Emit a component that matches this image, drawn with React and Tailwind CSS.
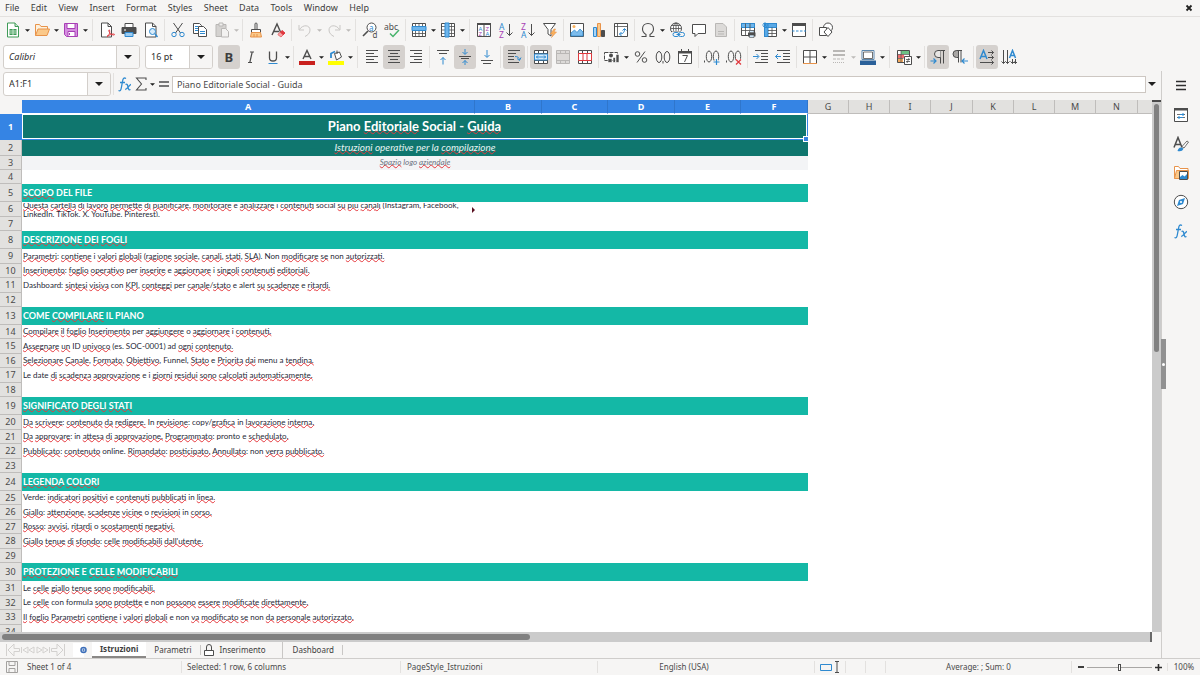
import { Fragment } from 'react';
import clsx from 'clsx';

const INK = '#4d4d4d';
const BLUE = '#2f8ad0';
const RED = '#e0383e';
const ORANGE = '#e8934a';
const GREEN = '#3f9b57';
const PURPLE = '#a83fb5';
const FADED = '#b9b7b5';

const glyph = { fontFamily: '"Noto Sans", sans-serif' };

// every icon is drawn on a 16x16 grid
const ICONS = {
    new: (
        <>
            <path d="M2.500 1h7.500l3.500 3.500V15h-11z" fill="#fff" stroke={GREEN} />
            <path d="M10 1v3.500h3.500" fill="#cfe9d5" stroke={GREEN} />
            <path d="M4.500 7h7v6h-7z" fill={GREEN} />
            <path d="M4.500 9h7M4.500 11h7M8 7v6" stroke="#d9f0de" strokeWidth=".8" />
        </>
    ),
    open: (
        <>
            <path d="M1.500 13.500v-11h4l1.500 2h6.500v3" fill="#fdf1dd" stroke={ORANGE} />
            <path d="M1.500 13.500l2.500-6.500h11.500l-2.500 6.500z" fill="#fbc98a" stroke={ORANGE} />
        </>
    ),
    save: (
        <>
            <path d="M1.500 1.500h13v13h-11l-2-2z" fill="#d58ee0" stroke={PURPLE} />
            <path d="M4 1.500h8v5H4z" fill="#fff" stroke={PURPLE} />
            <path d="M5 9.500h7v5H5z" fill="#fff" stroke={PURPLE} />
            <path d="M6.500 11v2" stroke={PURPLE} />
        </>
    ),
    pdf: (
        <>
            <path d="M2.500 1h6.500l3.500 3.500V15h-10z" fill="#fff" stroke={INK} />
            <path d="M9 1v3.500h3.500" fill="none" stroke={INK} />
            <path d="M8 14.500c3-2 3-5 2.500-6.500-1-1-1 2 1 3.500 1.500 1.500 4 2 4 1s-4-.500-7.500 2z" fill="#fff" stroke={RED} />
        </>
    ),
    print: (
        <>
            <path d="M4 5V1.500h8V5" fill="#fff" stroke={INK} />
            <path d="M1 5.500h14v6H1z" fill={INK} stroke={INK} />
            <path d="M4 10.500h8v4H4z" fill="#9ccbf0" stroke={BLUE} />
            <path d="M3 8h2" stroke="#fff" />
        </>
    ),
    preview: (
        <>
            <path d="M2.500 1h7l3.500 3.500V15H2.500z" fill="#fff" stroke={INK} />
            <path d="M9.500 1v3.500H13" fill="none" stroke={INK} />
            <circle cx="9.500" cy="9.500" r="3" fill="#d9ecfa" stroke={BLUE} />
            <path d="M12 12l2.500 3" stroke={BLUE} strokeWidth="1.500" />
        </>
    ),
    cut: (
        <>
            <path d="M3.500 1l7 10M12.500 1l-7 10" stroke={INK} fill="none" />
            <circle cx="4" cy="12.500" r="2.200" fill="none" stroke={BLUE} />
            <circle cx="12" cy="12.500" r="2.200" fill="none" stroke={BLUE} />
        </>
    ),
    copy: (
        <>
            <path d="M1.500 1.500h6l2 2v8h-8z" fill="#fff" stroke={INK} />
            <path d="M6.500 4.500h5l3 3v7h-8z" fill="#fff" stroke={INK} />
            <path d="M8 9.500h5M8 11.500h5M3 4.500h3M3 6.500h3M3 8.500h3" stroke={BLUE} />
        </>
    ),
    paste: (
        <>
            <path d="M2 2.500h10v12H2z" fill="#d4d2d0" stroke={FADED} />
            <path d="M5 1h4v3H5z" fill="#efeeed" stroke={FADED} />
            <path d="M7.500 6.500h4l3 3v5.500h-7z" fill="#f3f2f1" stroke={FADED} />
        </>
    ),
    clone: (
        <>
            <path d="M7 7V2a1 1 0 012 0v5" fill="#fff" stroke={INK} />
            <path d="M3.500 7.500h9v3h-9z" fill="#fff" stroke={INK} />
            <path d="M3.500 10.500h9l1 4.500H2.500z" fill="#fbc98a" stroke={ORANGE} />
            <path d="M6 12v3M9 12v3" stroke={ORANGE} />
        </>
    ),
    clear: (
        <>
            <path d="M2 13L7 2l3.500 8M4 9.500h5" stroke={INK} strokeWidth="1.400" fill="none" />
            <path d="M8 12.500l4-4 3 2.500-4 4z" fill={RED} stroke={RED} />
            <path d="M8 12.500l2-2 3 2.500-2 2z" fill="#f5a3a6" />
        </>
    ),
    undo: <path d="M2 3v5h5M2.500 7.500C6 2 13 3 13 8c0 3-2 5-5 6.500" fill="none" stroke="#c9c7c5" />,
    redo: <path d="M14 3v5H9M13.500 7.500C10 2 3 3 3 8c0 3 2 5 5 6.500" fill="none" stroke="#c9c7c5" />,
    find: (
        <>
            <circle cx="9.500" cy="5.500" r="4.500" fill="#fff" stroke={INK} />
            <path d="M6 9l-5 5" stroke={INK} strokeWidth="1.600" />
            <text x="7" y="8.500" fontSize="8" fill={BLUE} style={glyph}>a</text>
            <text x="10.500" y="15.500" fontSize="8" fill={INK} style={glyph}>d</text>
        </>
    ),
    spell: (
        <>
            <text x="0" y="7.500" fontSize="8.500" fill={INK} style={glyph}>abc</text>
            <path d="M6 11.500l3 3 6-6.500" fill="none" stroke="#47b36b" strokeWidth="1.500" />
        </>
    ),
    row: (
        <>
            <path d="M1.500 1.500h13v13h-13z" fill="#fff" stroke={INK} />
            <path d="M1.500 11.500h13M4.500 1.500v13M8 1.500v13M11.500 1.500v13" stroke={INK} strokeWidth=".8" />
            <path d="M1 4.500h14v4H1z" fill="#6db5ec" stroke={BLUE} />
        </>
    ),
    column: (
        <>
            <path d="M1.500 1.500h13v13h-13z" fill="#fff" stroke={INK} />
            <path d="M11.500 1.500v13M1.500 4.500h13M1.500 8h13M1.500 11.500h13" stroke={INK} strokeWidth=".8" />
            <path d="M5 1h4v14H5z" fill="#6db5ec" stroke={BLUE} />
        </>
    ),
    sort: (
        <>
            <path d="M1.500 1.500h13v13h-13z" fill="#fff" stroke={INK} />
            <path d="M1 1h14v2H1z" fill={INK} />
            <path d="M8 3v12" stroke={INK} />
            <g fontSize="6" style={glyph}>
                <text x="2.500" y="8.500" fill={BLUE}>A</text>
                <text x="2.500" y="14" fill={PURPLE}>Z</text>
                <text x="9.500" y="8.500" fill={PURPLE}>Z</text>
                <text x="9.500" y="14" fill={BLUE}>A</text>
            </g>
        </>
    ),
    sortAsc: (
        <>
            <text x="1" y="7.500" fontSize="8.500" fill={BLUE} style={glyph}>A</text>
            <text x="1" y="15.500" fontSize="8.500" fill={PURPLE} style={glyph}>Z</text>
            <path d="M11.500 2v11.500M8.500 10.500l3 3 3-3" fill="none" stroke={INK} />
        </>
    ),
    sortDesc: (
        <>
            <text x="1" y="7.500" fontSize="8.500" fill={PURPLE} style={glyph}>Z</text>
            <text x="1" y="15.500" fontSize="8.500" fill={BLUE} style={glyph}>A</text>
            <path d="M11.500 2v11.500M8.500 10.500l3 3 3-3" fill="none" stroke={INK} />
        </>
    ),
    filter: (
        <>
            <path d="M1.500 1.500h12L9 7.500V14l-3-2V7.500z" fill="#fff" stroke={INK} />
            <path d="M12 7l-3.500 5h2.500l-1.500 3.500L14.500 10H12l1.500-3z" fill="#fbb25c" stroke={ORANGE} strokeWidth=".6" />
        </>
    ),
    image: (
        <>
            <path d="M1.500 1.500h13v13h-13z" fill="#fff" stroke={INK} />
            <path d="M2 14v-3l3.500-3L8 10.500l3-3.500 3 3v4z" fill="#7dbcec" stroke={BLUE} strokeWidth=".8" />
            <circle cx="5" cy="4.500" r="1.500" fill="#fbb25c" />
        </>
    ),
    chart: (
        <>
            <path d="M2.500 5.500h3v9h-3z" fill="#a8d3f5" stroke={BLUE} />
            <path d="M6.500 1.500h3v13h-3z" fill="#fbc98a" stroke={ORANGE} />
            <path d="M10.500 8.500h3v6h-3z" fill={INK} stroke={INK} />
        </>
    ),
    pivot: (
        <>
            <path d="M1.500 1.500h13v13h-13z" fill="#fff" stroke={INK} />
            <path d="M1.500 4.500h13M4.500 1.500v13" stroke={INK} strokeWidth=".8" />
            <path d="M6.500 12c4 0 5-2 5-5M9.500 8.500l2-2 2 2M8.500 10l-2 2 2 2" fill="none" stroke={BLUE} />
        </>
    ),
    omega: <path d="M1.500 14.500h4.500v-2C3.500 11 2.500 9 2.500 7c0-3.500 2.500-5.500 5.500-5.500s5.500 2 5.500 5.500c0 2-1 4-3.500 5.500v2h4.500" fill="none" stroke={INK} strokeWidth="1.100" />,
    hyperlink: (
        <>
            <circle cx="7" cy="6.500" r="5.500" fill="#fff" stroke={INK} />
            <path d="M1.500 6.500h11M7 1v11M2.500 3.500h9M2.500 9.500h9" stroke={INK} strokeWidth=".8" />
            <ellipse cx="7" cy="6.500" rx="2.600" ry="5.500" fill="none" stroke={INK} strokeWidth=".8" />
            <path d="M3 9.500h13v6H3z" fill="#f6f5f4" />
            <rect x="4" y="10.500" width="6" height="4" rx="2" fill="none" stroke={BLUE} />
            <rect x="9.500" y="10.500" width="6" height="4" rx="2" fill="none" stroke={BLUE} />
            <path d="M7.500 12.500h4" stroke={BLUE} />
        </>
    ),
    comment: <path d="M1.500 2.500h13v9H7l-3 3v-3H1.500z" fill="#fff" stroke={INK} />,
    header: (
        <>
            <path d="M2.500 1.500h7.500l3.500 3.500v9.500h-11z" fill="#dcdad8" stroke={FADED} />
            <path d="M5 9.500h6M5 12h6" stroke={FADED} />
        </>
    ),
    printArea: (
        <>
            <path d="M1.500 1.500h13v12h-13z" fill="#fff" stroke={INK} />
            <path d="M1.500 1.500h13v4h-13z" fill="#6db5ec" stroke={BLUE} />
            <path d="M1.500 8.500h13M5.500 1.500v12M10 1.500v12" stroke={INK} strokeWidth=".8" />
            <path d="M8 10.500h7.500v4H8z" fill={INK} />
            <path d="M9.500 8.500h4.500v2H9.500zM9.500 13h4.500v2.500H9.500z" fill="#cfe6f8" stroke={INK} strokeWidth=".6" />
        </>
    ),
    freeze: (
        <>
            <path d="M2.500 1.500h12v13h-12z" fill="#fff" stroke={INK} />
            <path d="M2.500 1.500h12v4h-12zM2.500 1.500h3.500v13H2.500z" fill="#5aa9e6" stroke={BLUE} />
            <path d="M6 8.500h8.500M6 11.500h8.500M10 5.500v9" stroke={INK} strokeWidth=".8" />
            <path d="M3 0v6M0 3h6M1 1l4 4M5 1L1 5" stroke={BLUE} strokeWidth=".8" />
        </>
    ),
    split: (
        <>
            <path d="M1.500 1.500h13v13h-13z" fill="#fff" stroke={INK} />
            <path d="M1 1h14v3H1z" fill={INK} />
            <path d="M1 9h14" stroke={BLUE} strokeDasharray="2.500 1.500" />
        </>
    ),
    shapes: (
        <>
            <circle cx="10" cy="5.500" r="4.500" fill="#fff" stroke={INK} />
            <path d="M1.500 5.500h7v8h-7z" fill="#fff" stroke={INK} />
            <path d="M10 5.500l4 4.500-4 4.500L6 10z" fill="#fff" stroke={INK} />
        </>
    ),
    bold: <text x="3.500" y="13" fontSize="13" fontWeight="700" fill="#3d3d3d" style={glyph}>B</text>,
    italic: <path d="M7 3h4M5 13.500h4M9.200 3L6.800 13.500" stroke={INK} strokeWidth="1.200" fill="none" />,
    underline: (
        <>
            <path d="M4.500 2.500v6.500c0 4 7 4 7 0V2.500" fill="none" stroke={INK} strokeWidth="1.300" />
            <path d="M3.500 14.500h9" stroke={BLUE} />
        </>
    ),
    fontColor: (
        <>
            <path d="M4 10L8 1.500 12 10M5.500 7.500h5" fill="none" stroke={INK} strokeWidth="1.400" />
            <path d="M0 12h16v4H0z" fill="#c9211e" />
        </>
    ),
    highlight: (
        <>
            <path d="M6.500 4.500l5-1.500 2 5-5 3z" fill="#fff" stroke={INK} />
            <path d="M9 5V1.500" stroke={INK} />
            <path d="M3 9V4.500l4-2" fill="none" stroke={BLUE} strokeWidth="1.800" />
            <path d="M0 12h16v4H0z" fill="#ffff00" />
        </>
    ),
    alignLeft: <path d="M2 1.500h12M2 4.500h8M2 7.500h12M2 10.500h8M2 13.500h12" stroke={INK} />,
    alignCenter: <path d="M2 1.500h12M4 4.500h8M2 7.500h12M4 10.500h8M2 13.500h12" stroke={INK} />,
    alignRight: <path d="M2 1.500h12M6 4.500h8M2 7.500h12M6 10.500h8M2 13.500h12" stroke={INK} />,
    alignTop: (
        <>
            <path d="M2 1.500h12M4 4.500h8" stroke={INK} />
            <path d="M8 15.500V8.500M5.500 11L8 8.500l2.500 2.500" stroke={BLUE} fill="none" />
        </>
    ),
    alignMiddle: (
        <>
            <path d="M2 7.500h12M4 9.500h8" stroke={INK} />
            <path d="M8 0v5M5.500 3L8 5.500 10.500 3M8 16v-4.500M5.500 14L8 11.500l2.500 2.500" stroke={BLUE} fill="none" />
        </>
    ),
    alignBottom: (
        <>
            <path d="M2 11.500h12M4 14.500h8" stroke={INK} />
            <path d="M8 1v7M5.500 6L8 8.500 10.500 6" stroke={BLUE} fill="none" />
        </>
    ),
    wrap: (
        <>
            <path d="M2 1.500h12M2 4.500h8M2 7.500h6M2 10.500h6M2 13.500h11" stroke={INK} />
            <path d="M9 7.500c3 0 4 1 4.500 3.500M11 9.500l2.500 2 1.500-3" stroke={BLUE} fill="none" />
        </>
    ),
    mergeCenter: (
        <>
            <path d="M1.500 1.500h13v13h-13zM1.500 4.500h13M1.500 11.500h13M5.500 1.500v3M10.500 1.500v3M5.500 11.500v3M10.500 11.500v3" fill="#fff" stroke={INK} />
            <path d="M1.500 5h13v6h-13z" fill="#d4eafb" stroke={BLUE} />
            <path d="M3 8h10M5 6.500L3.500 8 5 9.500M11 6.500L12.500 8 11 9.500" fill="none" stroke={BLUE} />
        </>
    ),
    merge: <path d="M1.500 1.500h13v13h-13zM1.500 4.500h13M1.500 11.500h13M5.500 1.500v3M10.500 1.500v3M5.500 11.500v3M10.500 11.500v3" fill="#dcdad8" stroke={FADED} />,
    unmerge: (
        <>
            <path d="M1.500 1.500h13v13h-13zM5.500 1.500v3M10.500 1.500v3M5.500 11.500v3M10.500 11.500v3" fill="#fff" stroke={INK} />
            <path d="M1.500 4.500h13v7h-13zM6 4.500v7M10 4.500v7" fill="#fff" stroke={RED} />
        </>
    ),
    currency: (
        <>
            <path d="M.500 3.500h13v8H.500z" fill="#fff" stroke={INK} strokeDasharray="4 1" />
            <circle cx="7" cy="6.500" r="2" fill={INK} />
            <path d="M4 9.500h4v4H4zM9 8.500h2.500v5H9zM12 5.500h3v8h-3z" fill={INK} stroke="#fff" strokeWidth=".6" />
        </>
    ),
    percent: (
        <>
            <circle cx="4.500" cy="5" r="2.300" fill="none" stroke={INK} />
            <circle cx="11.500" cy="11" r="2.300" fill="none" stroke={INK} />
            <path d="M12 2.500L4 13.500" stroke={INK} />
        </>
    ),
    number: (
        <>
            <ellipse cx="4" cy="8" rx="2.800" ry="5.500" fill="none" stroke={INK} />
            <ellipse cx="12" cy="8" rx="2.800" ry="5.500" fill="none" stroke={INK} />
            <path d="M8 12v2.500" stroke={INK} />
        </>
    ),
    date: (
        <>
            <path d="M1.500 2.500h13v12h-13z" fill="#fff" stroke={INK} />
            <path d="M1 2h14v2.500H1z" fill={INK} />
            <path d="M4.500 0v3M11.500 0v3" stroke={INK} />
            <path d="M5.500 6.500h5l-3 6.500" fill="none" stroke={INK} />
        </>
    ),
    addDecimal: (
        <>
            <path d="M.500 11.500v2" stroke={INK} />
            <ellipse cx="5" cy="7.500" rx="2.700" ry="5.500" fill="none" stroke={INK} />
            <ellipse cx="12" cy="7.500" rx="2.700" ry="5.500" fill="none" stroke={INK} />
            <path d="M12.500 10v6M9.500 13h6" stroke="#f6f5f4" strokeWidth="3" />
            <path d="M12.500 10v6M9.500 13h6" stroke={BLUE} strokeWidth="1.200" />
        </>
    ),
    removeDecimal: (
        <>
            <path d="M.500 11.500v2" stroke={INK} />
            <ellipse cx="5" cy="7.500" rx="2.700" ry="5.500" fill="none" stroke={INK} />
            <ellipse cx="12" cy="7.500" rx="2.700" ry="5.500" fill="none" stroke={INK} />
            <path d="M10 10.500l5 5M15 10.500l-5 5" stroke="#f6f5f4" strokeWidth="3" />
            <path d="M10 10.500l5 5M15 10.500l-5 5" stroke={RED} strokeWidth="1.200" />
        </>
    ),
    indent: (
        <>
            <path d="M2 1.500h13M8 4.500h7M8 7.500h7M8 10.500h7M2 13.500h13" stroke={INK} />
            <path d="M0 7.500h5.500M3.500 5L6 7.500 3.500 10" stroke={BLUE} fill="none" />
        </>
    ),
    outdent: (
        <>
            <path d="M2 1.500h13M8 4.500h7M8 7.500h7M8 10.500h7M2 13.500h13" stroke={INK} />
            <path d="M.500 7.500H6M3 5L.500 7.500 3 10" stroke={BLUE} fill="none" />
        </>
    ),
    borders: (
        <>
            <path d="M1.500 14.500v-13h13v13M8 1.500v13M1.500 8h13" fill="#fff" stroke={INK} />
            <path d="M1 14.500h14" stroke={ORANGE} />
        </>
    ),
    borderStyle: (
        <>
            <path d="M2 2h12M2 6h12" stroke={FADED} strokeWidth="2" />
            <path d="M2 10h12" stroke={FADED} strokeDasharray="3 1" />
            <path d="M2 13.500h12" stroke={FADED} strokeDasharray="1 1" />
        </>
    ),
    borderColor: (
        <>
            <path d="M2 1.500h12v9H2z" fill="#fff" stroke="#5c87ad" />
            <path d="M3.500 3h9v6.500h-9z" fill="#fff" stroke={INK} strokeWidth=".8" />
            <path d="M0 11.500h16V16H0z" fill="#2a6099" />
        </>
    ),
    conditional: (
        <>
            <path d="M1.500 1.500h12v12h-12z" fill="#fff" stroke={INK} />
            <path d="M5 2h8v3H5z" fill="#6cc184" />
            <path d="M2 5.500h6v3.500H2z" fill="#ef6f6f" />
            <path d="M2 9.500h5v3.500H2z" fill="#f4a95c" />
            <path d="M5 1.500v12M1.500 5.500h12M1.500 9.500h6" stroke={INK} strokeWidth=".7" />
            <path d="M8.500 7.500h7v8h-7z" fill="#fff" stroke={INK} />
            <path d="M10 10.500h4M10 12.500h4M13 9l-2 5" stroke={INK} strokeWidth=".8" />
        </>
    ),
    ltr: (
        <>
            <path d="M9 1.500h6M10.500 1.500v13M13.500 1.500v13" stroke={INK} />
            <path d="M10.500 1.500H8a3 3 0 000 7h2.500" fill="#e8e6e4" stroke={INK} />
            <path d="M.500 12h5M3.500 9.500L6 12l-2.500 2.500" fill="none" stroke={BLUE} strokeWidth="1.200" />
        </>
    ),
    rtl: (
        <>
            <path d="M4.500 1.500H10M6.500 1.500v12M9 1.500v12" stroke={INK} />
            <path d="M6.500 1.500H4.500a3 3 0 000 7h2z" fill="#a9a7a5" stroke={INK} />
            <path d="M10 12h6M12.500 9.500L10 12l2.500 2.500" fill="none" stroke={BLUE} strokeWidth="1.200" />
        </>
    ),
    textLtr: (
        <>
            <path d="M1 10L4.500 1.500 8 10M2 7.500h5" fill="none" stroke={BLUE} strokeWidth="1.500" />
            <path d="M9 3.500h5.500M9 8.500h5.500M1 13.500h13.500M12.500 1.500l2 2-2 2M12.500 6.500l2 2-2 2M12.500 11.500l2 2-2 2" fill="none" stroke={INK} />
        </>
    ),
    textTtb: (
        <>
            <path d="M8.500 9l3-7.500 3 7.500M9.500 6.500h4" fill="none" stroke={BLUE} strokeWidth="1.500" />
            <path d="M2.500 1v13.500M6.500 1v13.500M11.500 10v4.500M.500 12.500l2 2 2-2M4.500 12.500l2 2 2-2M9.500 12.500l2 2 2-2M14.500 10v4.500M13 13l1.500 1.500L16 13" fill="none" stroke={INK} />
        </>
    ),
    fx: (
        <>
            <path d="M9 2.500c-2-1.200-3 0-3.400 2.500L4.300 12c-.4 2.500-1.300 3.300-2.800 2.500M3 6.500h5" fill="none" stroke={BLUE} strokeWidth="1.300" />
            <path d="M8.500 8.500c1.500-.8 2 0 2.500 2.500s1 3.300 2.500 2.500M14 8.500c-1.500 0-4 5-5.800 5" fill="none" stroke={BLUE} strokeWidth="1.300" />
        </>
    ),
    sigma: <path d="M13 4V2H3.500L8.500 8l-5 6H13v-2" fill="none" stroke={INK} strokeWidth="1.100" />,
    equals: <path d="M3 6h10M3 10h10" stroke={INK} strokeWidth="1.600" />,
    menu: <path d="M3 3.500h10M3 7.500h10M3 11.500h10" stroke="#2e2e2e" strokeWidth="1.500" />,
    properties: (
        <>
            <path d="M1.500 1.500h13v13h-13z" fill="#fff" stroke={INK} />
            <path d="M1 1h14v2.500H1z" fill={INK} />
            <path d="M4 7.500h8M4 10.500h8" stroke={INK} strokeWidth=".8" />
            <path d="M10 6v3M6 9v3M5 10.500h5M7 7.500h4" stroke={BLUE} />
        </>
    ),
    styles: (
        <>
            <path d="M1 11.500L5 1.500 9 11.500M2.500 8.500h5" fill="none" stroke={INK} strokeWidth="1.500" />
            <path d="M9 10.500l5-5.500 1.500 1-4.500 6z" fill="#fff" stroke={INK} strokeWidth=".8" />
            <path d="M4.500 15c1-3.500 3-4.500 6-2.500-1 3-3.500 3-6 2.500z" fill={BLUE} />
        </>
    ),
    gallery: (
        <>
            <path d="M1.500 13.500v-12h4l1.500 2h8v3" fill="#fff" stroke={ORANGE} />
            <path d="M1.500 13.500l2-8h12v8z" fill="#fbc98a" stroke={ORANGE} />
            <path d="M6.500 6.500h8v8h-8z" fill="#fff" stroke={INK} />
            <path d="M7 14v-2l2.500-2 2 1.500 2.500-2.500v5z" fill={BLUE} />
        </>
    ),
    navigator: (
        <>
            <circle cx="8" cy="8" r="6.700" fill="#fff" stroke={INK} />
            <path d="M12 4l-2 6-6 2 2-6z" fill={BLUE} />
            <circle cx="8" cy="8" r="1.100" fill="#fff" />
        </>
    ),
    lock: (
        <>
            <path d="M3.500 8.500h9v5h-9z" fill="#fff" stroke={INK} />
            <path d="M5.500 8.500V5a2.500 2.500 0 015 0v3.500" fill="none" stroke={INK} />
        </>
    ),
    addSheet: (
        <>
            <path d="M0 1h11v14H0z" fill="#fff" />
            <circle cx="10.500" cy="8" r="2.500" fill="#fff" stroke="#3b6db8" strokeWidth="1.500" />
            <path d="M10.500 6.500v3M9 8h3" stroke="#3b6db8" strokeWidth=".8" />
        </>
    ),
    docSave: (
        <>
            <path d="M2.500 2.500h11v11h-11z" fill="none" stroke="#a3a19f" />
            <path d="M5 2.500h6v4H5zM5 9.500h6v4H5z" fill="none" stroke="#a3a19f" />
        </>
    ),
    close: <path d="M5.500 5.500l5 5M10.500 5.500l-5 5" stroke="#222" strokeWidth="1.800" />,
    firstSheet: <path d="M1.500 2v12M14.500 6.500H9V2L3 8l6 6V9.500h5.500z" fill="none" stroke="#d3d1cf" />,
    prevSheet: <path d="M1.500 5v6M8 5L3 8l5 3zM14 5L9 8l5 3z" fill="none" stroke="#d3d1cf" />,
    nextSheet: <path d="M14.500 5v6M8 5l5 3-5 3zM2 5l5 3-5 3z" fill="none" stroke="#d3d1cf" />,
    lastSheet: <path d="M14.500 2v12M1.500 6.500H7V2l6 6-6 6V9.500H1.500z" fill="none" stroke="#d3d1cf" />,
};

function Icon({ name }) {
    return (
        <svg viewBox="0 0 16 16" className="size-4 shrink-0" aria-hidden="true">
            {ICONS[name]}
        </svg>
    );
}

function Caret({ faded, large }) {
    return (
        <svg viewBox="0 0 8 4" className={clsx('shrink-0', large ? 'h-1 w-2' : 'h-[3px] w-[5px]')} aria-hidden="true">
            <path d="M0 0h8L4 4z" fill={faded ? '#bdbbb9' : '#1f1f1f'} />
        </svg>
    );
}

// "|" is a separator, "||" a wide one, "v" and "v-" open the menu of the button before them
const STANDARD_BAR = [
    'new', 'v', 'open', 'v', 'save', 'v', '||', 'pdf', 'print', 'preview', '|', 'cut', 'copy', 'paste', 'v-', '|',
    'clone', 'clear', '|', 'undo', 'v-', 'redo', 'v-', '||', 'find', 'spell', '|', 'row', 'v', 'column', 'v', '||',
    'sort', 'sortAsc', 'sortDesc', 'filter', '|', 'image', 'chart', 'pivot', '|', 'omega', 'v', 'hyperlink', 'comment',
    'header', '|', 'printArea', 'freeze', 'v', 'split', '|', 'shapes',
];

const FORMAT_BAR = [
    'bold', 'italic', 'underline', 'v', '|', 'fontColor', 'v', 'highlight', 'v', '||', 'alignLeft', 'alignCenter',
    'alignRight', '|', 'alignTop', 'alignMiddle', 'alignBottom', '|', 'wrap', '|', 'mergeCenter', 'merge', 'unmerge',
    '|', 'currency', 'v', 'percent', 'number', 'date', '|', 'addDecimal', 'removeDecimal', '|', 'indent', 'outdent',
    '|', 'borders', 'v', 'borderStyle', 'v-', 'borderColor', 'v', '||', 'conditional', 'v', '|', 'ltr', 'rtl', '|',
    'textLtr', 'textTtb',
];

const PRESSED = ['bold', 'alignCenter', 'alignMiddle', 'wrap', 'mergeCenter', 'ltr', 'textLtr'];

function BarItems({ items }) {
    return items.map((item, i) => {
        if (item[0] === '|') {
            return (
                <div key={i} className={clsx('flex h-[22px] shrink-0 justify-center', item === '||' ? 'w-[7px]' : 'w-[5px]')}>
                    <div className="w-px bg-[#e3e1df]" />
                </div>
            );
        }
        if (item[0] === 'v') {
            return (
                <button key={i} aria-label={`${items[i - 1]} options`} className="flex h-6 w-[7px] shrink-0 items-center justify-center">
                    <Caret faded={item === 'v-'} />
                </button>
            );
        }
        return (
            <button
                key={i}
                aria-label={item}
                className={clsx(
                    'flex h-6 w-[22px] shrink-0 items-center justify-center rounded-[3px]',
                    PRESSED.includes(item) && 'bg-[#d5d1ce]'
                )}
            >
                <Icon name={item} />
            </button>
        );
    });
}

function Combo({ label, value, className, inputClass }) {
    return (
        <div className={clsx('flex h-6 shrink-0 overflow-hidden rounded-[3px] border border-[#d3cfcb] bg-white', className)}>
            <input aria-label={label} defaultValue={value} className={clsx('min-w-0 flex-1 px-[5px] text-[9px] text-[#2e2e2e] outline-none', inputClass)} />
            <button aria-label={`${label} list`} className="flex w-[23px] items-center justify-center border-l border-[#d3cfcb] bg-[#f6f5f4]">
                <Caret large />
            </button>
        </div>
    );
}

const COLUMNS = [
    { name: 'A', width: 'w-[453px]' },
    { name: 'B', width: 'w-[67px]' },
    { name: 'C', width: 'w-[66px]' },
    { name: 'D', width: 'w-[67px]' },
    { name: 'E', width: 'w-[66px]' },
    { name: 'F', width: 'w-[67px]' },
    { name: 'G', width: 'w-[41px]' },
    { name: 'H', width: 'w-[41px]' },
    { name: 'I', width: 'w-[41px]' },
    { name: 'J', width: 'w-[42px]' },
    { name: 'K', width: 'w-[41px]' },
    { name: 'L', width: 'w-[41px]' },
    { name: 'M', width: 'w-[41px]' },
    { name: 'N', width: 'w-[42px]' },
    { name: '', width: 'w-[41px]' },
];

// words between underscores carry the spell checker's wavy line
const ROWS = [
    { kind: 'title', text: 'Piano _Editoriale_ Social - _Guida_' },
    { kind: 'subtitle', text: '_Istruzioni_ operative per la _compilazione_' },
    { kind: 'logo', text: '_Spazio_ logo _aziendale_' },
    { kind: 'gap' },
    { kind: 'section', text: '_SCOPO_ DEL FILE' },
    {
        kind: 'wrapped',
        text: '_Questa_ _cartella_ _di_ _lavoro_ _permette_ _di_ _pianificare_, _monitorare_ e _analizzare_ i _contenuti_ social _su_ _piu_ _canali_ (Instagram, Facebook,\nLinkedIn, TikTok, X, YouTube, Pinterest).',
    },
    { kind: 'gap' },
    { kind: 'section', text: '_DESCRIZIONE_ _DEI_ _FOGLI_' },
    { kind: 'tall', text: '_Parametri_: _contiene_ i _valori_ _globali_ (_ragione_ _sociale_, _canali_, _stati_, _SLA_). Non _modificare_ _se_ non _autorizzati._' },
    { kind: 'text', text: '_Inserimento_: _foglio_ _operativo_ per _inserire_ e _aggiornare_ i _singoli_ _contenuti_ _editoriali._' },
    { kind: 'tall', text: 'Dashboard: _sintesi_ _visiva_ con _KPI_, _conteggi_ per _canale_/_stato_ e alert _su_ _scadenze_ e _ritardi._' },
    { kind: 'gap' },
    { kind: 'section', text: 'COME _COMPILARE_ IL PIANO' },
    { kind: 'text', text: '_Compilare_ _il_ _foglio_ _Inserimento_ per _aggiungere_ o _aggiornare_ i _contenuti._' },
    { kind: 'tall', text: '_Assegnare_ _un_ ID _univoco_ (es. SOC-0001) ad _ogni_ _contenuto._' },
    { kind: 'text', text: '_Selezionare_ _Canale_, _Formato_, _Obiettivo_, Funnel, _Stato_ e _Priorita_ _dai_ menu a _tendina._' },
    { kind: 'tall', text: 'Le date _di_ _scadenza_ _approvazione_ e i _giorni_ _residui_ _sono_ _calcolati_ _automaticamente._' },
    { kind: 'gap' },
    { kind: 'section', text: '_SIGNIFICATO_ _DEGLI_ _STATI_' },
    { kind: 'tall', text: '_Da_ _scrivere_: _contenuto_ _da_ _redigere._ In _revisione_: copy/_grafica_ in _lavorazione_ _interna._' },
    { kind: 'text', text: '_Da_ _approvare_: in _attesa_ _di_ _approvazione._ _Programmato_: pronto e _schedulato._' },
    { kind: 'tall', text: '_Pubblicato_: _contenuto_ online. _Rimandato_: _posticipato._ _Annullato_: non _verra_ _pubblicato._' },
    { kind: 'gap' },
    { kind: 'section', text: '_LEGENDA_ _COLORI_' },
    { kind: 'text', text: 'Verde: _indicatori_ _positivi_ e _contenuti_ _pubblicati_ in _linea._' },
    { kind: 'tall', text: '_Giallo_: _attenzione_, _scadenze_ _vicine_ o _revisioni_ in _corso._' },
    { kind: 'text', text: '_Rosso_: _avvisi_, _ritardi_ o _scostamenti_ _negativi._' },
    { kind: 'tall', text: "_Giallo_ _tenue_ _di_ _sfondo_: _celle_ _modificabili_ _dall'utente._" },
    { kind: 'gap' },
    { kind: 'section', text: '_PROTEZIONE_ E _CELLE_ _MODIFICABILI_' },
    { kind: 'tall', text: 'Le _celle_ _giallo_ _tenue_ _sono_ _modificabili._' },
    { kind: 'text', text: 'Le _celle_ con formula _sono_ _protette_ e non _possono_ _essere_ _modificate_ _direttamente._' },
    { kind: 'tall', text: '_Il_ _foglio_ _Parametri_ _contiene_ i _valori_ _globali_ e non _va_ _modificato_ _se_ non _da_ _personale_ _autorizzato._' },
    { kind: 'gap' },
];

const ROW_HEIGHT = {
    title: 'h-[26px]',
    subtitle: 'h-4',
    logo: 'h-[14px]',
    gap: 'h-[14px]',
    section: 'h-[18px]',
    wrapped: 'h-[15px]',
    text: 'h-[14px]',
    tall: 'h-[15px]',
};

const CELL_STYLE = {
    title: 'bg-[#0f766e] text-center text-[13px] font-bold text-white',
    subtitle: 'bg-[#0f766e] pb-0.5 text-center text-[10px] italic text-[#e6f4f2]',
    logo: 'bg-[#f3f4f6] pb-0.5 text-center text-[8px] italic text-[#6b7280]',
    section: 'bg-[#14b8a6] pb-px pl-px text-[9px] font-bold text-white',
    wrapped: 'pl-px text-[8px] text-[#1f2937]',
    text: 'pb-0.5 pl-px text-[8px] text-[#1f2937]',
    tall: 'pb-0.5 pl-px text-[8px] text-[#1f2937]',
};

function Spelled({ text }) {
    return text.split('_').map((part, i) =>
        i % 2 ? (
            <span
                key={i}
                className="underline decoration-[#e5383d] decoration-wavy decoration-[0.5px] [text-decoration-skip-ink:none] [text-underline-offset:-1px]"
            >
                {part}
            </span>
        ) : (
            <Fragment key={i}>{part}</Fragment>
        )
    );
}

function CellContent({ row }) {
    if (row.kind === 'title') {
        return (
            <div className="relative h-[26px] border-r border-b border-[#3584e4]">
                <div className="flex h-full items-center justify-center border border-white pb-0.5">
                    <span><Spelled text={row.text} /></span>
                </div>
                <span className="absolute -right-px -bottom-0.5 z-10 size-1 bg-[#3584e4] outline outline-white" />
            </div>
        );
    }
    if (row.kind === 'wrapped') {
        return (
            <div className="relative flex h-[14px] items-center overflow-hidden leading-[9px] whitespace-pre">
                <div><Spelled text={row.text} /></div>
                <svg viewBox="0 0 3 6" className="absolute right-0 bottom-1 h-[6px] w-[3px]" aria-hidden="true">
                    <path d="M0 0l3 3-3 3z" fill="#5a1020" />
                </svg>
            </div>
        );
    }
    return <Spelled text={row.text} />;
}

function Sheet() {
    return (
        <div className="min-w-0 flex-1 overflow-hidden bg-white">
            <table className="w-[1179px] table-fixed border-separate border-spacing-0">
                <thead>
                    <tr className="h-[14px] text-[9px] leading-[12px]">
                        <td className="w-[22px] bg-[#f6f5f4] p-0" />
                        {COLUMNS.map((col, i) => (
                            <th
                                key={i}
                                scope="col"
                                className={clsx(
                                    'border-r border-b p-0',
                                    col.width,
                                    i < 6
                                        ? 'border-r-[#2f76cc] border-b-white bg-[#3584e4] font-bold text-white'
                                        : 'border-[#bfbdbb] bg-[#e2e1df] font-normal text-[#4a4a4a]'
                                )}
                            >
                                {col.name}
                            </th>
                        ))}
                    </tr>
                </thead>
                <tbody>
                    {ROWS.map((row, i) => (
                        <tr key={i} className={ROW_HEIGHT[row.kind]}>
                            <th
                                scope="row"
                                className={clsx(
                                    'border-r border-b p-0 text-[9px] leading-[12px]',
                                    i === 0
                                        ? 'border-[#3584e4] bg-[#3584e4] font-bold text-white'
                                        : 'border-[#bfbdbb] bg-[#e2e1df] font-normal text-[#4a4a4a]'
                                )}
                            >
                                {i + 1}
                            </th>
                            {row.text ? (
                                <td
                                    colSpan={row.kind === 'text' || row.kind === 'tall' || row.kind === 'wrapped' ? 1 : 6}
                                    className={clsx(
                                        "p-0 font-['Lato',sans-serif] leading-[12px] whitespace-nowrap",
                                        CELL_STYLE[row.kind]
                                    )}
                                >
                                    <CellContent row={row} />
                                </td>
                            ) : (
                                <td className="p-0" />
                            )}
                        </tr>
                    ))}
                </tbody>
            </table>
        </div>
    );
}

function FormulaBar() {
    return (
        <div className="flex h-[29px] shrink-0 items-center pt-px pb-1 pl-[3px]">
            <Combo label="Name Box" value="A1:F1" className="w-[108px]" />
            <div className="ml-0.5 h-[22px] w-px bg-[#e3e1df]" />
            <button aria-label="Function Wizard" className="ml-[3px] flex w-4 justify-center">
                <Icon name="fx" />
            </button>
            <button aria-label="Select Function" className="flex w-[15px] justify-center">
                <Icon name="sigma" />
            </button>
            <button aria-label="Function list" className="flex w-2 justify-center">
                <Caret />
            </button>
            <button aria-label="Formula" className="flex w-4 justify-center">
                <Icon name="equals" />
            </button>
            <input
                aria-label="Input line"
                defaultValue="Piano Editoriale Social - Guida"
                className="h-[17px] min-w-0 flex-1 border border-[#cdc7c2] bg-white px-1 text-[9px] text-[#4a4a4a] outline-none"
            />
            <button aria-label="Expand Formula Bar" className="mr-1 flex w-[11px] shrink-0 justify-center">
                <Caret large />
            </button>
        </div>
    );
}

function Tabs() {
    return (
        <div className="flex h-[16px] shrink-0 items-center pl-[5px] text-[8px] text-[#3d3d3d]">
            {['firstSheet', 'prevSheet', 'nextSheet', 'lastSheet'].map((name) => (
                <button key={name} aria-label={name} className="flex w-[15px] justify-center">
                    <Icon name={name} />
                </button>
            ))}
            <button aria-label="Add sheet" className="mr-[3px] ml-2 flex">
                <Icon name="addSheet" />
            </button>
            <button className="h-full border-b-2 border-[#8a8886] bg-white px-2 leading-[14px] font-bold">Istruzioni</button>
            <button className="border-r border-[#c9c7c5] px-2 leading-[10px]">Parametri</button>
            <button className="flex items-center gap-[3px] border-r border-[#c9c7c5] pr-4 leading-[10px]">
                <Icon name="lock" />
                Inserimento
            </button>
            <button className="border-r border-[#c9c7c5] pr-2 pl-2.5 leading-[10px]">Dashboard</button>
        </div>
    );
}

function Sidebar() {
    return (
        <div className="relative flex w-[39px] shrink-0 flex-col items-center gap-[13px] border-l border-[#cfcdcb] pt-[7px]">
            {['menu', 'properties', 'styles', 'gallery', 'navigator', 'fx'].map((name) => (
                <button key={name} aria-label={`${name} deck`}>
                    <Icon name={name} />
                </button>
            ))}
            <button aria-label="Hide sidebar" className="absolute top-[268px] -left-px flex h-[50px] w-[5px] items-center justify-center bg-[#919191]">
                <span className="size-[3px] rounded-full bg-white" />
            </button>
        </div>
    );
}

function StatusBar() {
    return (
        <div className="flex h-[17px] shrink-0 items-center border-t border-[#cfcdcb] pl-1 text-[8px] leading-[12px] text-[#4a4a4a]">
            <Icon name="docSave" />
            <div className="ml-[7px] w-[155px] shrink-0 border-r border-[#e3e1df]">Sheet 1 of 4</div>
            <div className="w-[219px] shrink-0 border-r border-[#e3e1df] pl-[5px]">Selected: 1 row, 6 columns</div>
            <div className="w-[197px] shrink-0 border-r border-[#e3e1df] pl-1.5">PageStyle_Istruzioni</div>
            <div className="min-w-0 flex-1 border-r border-[#e3e1df] pr-11 text-center">English (USA)</div>
            <div className="flex w-[31px] shrink-0 justify-center border-r border-[#e3e1df]">
                <svg viewBox="0 0 20 12" className="h-3 w-5" aria-hidden="true">
                    <path d="M.500 3.500h11v6H.500z" fill="none" stroke={BLUE} />
                    <path d="M17 1v10M15 .500h4M15 11.500h4" stroke={INK} />
                </svg>
            </div>
            <div className="h-3 w-5 shrink-0 border-r border-[#e3e1df]" />
            <div className="h-3 w-5 shrink-0 border-r border-[#e3e1df]" />
            <div className="w-[186px] shrink-0 border-r border-[#e3e1df] text-center">Average: ; Sum: 0</div>
            <div className="flex w-24 shrink-0 items-center justify-center gap-[3px] border-r border-[#e3e1df]">
                <button aria-label="Zoom out" className="h-[2px] w-[6px] bg-[#3d3d3d]" />
                <input
                    type="range"
                    aria-label="Zoom"
                    defaultValue="50"
                    className="h-2 w-[65px] appearance-none bg-[linear-gradient(#a9a7a5,#a9a7a5)] bg-[length:100%_1px] bg-center bg-no-repeat [&::-webkit-slider-thumb]:h-[7px] [&::-webkit-slider-thumb]:w-[3px] [&::-webkit-slider-thumb]:appearance-none [&::-webkit-slider-thumb]:border [&::-webkit-slider-thumb]:border-[#4a4a4a] [&::-webkit-slider-thumb]:bg-white"
                />
                <button aria-label="Zoom in">
                    <svg viewBox="0 0 7 7" className="size-[7px]" aria-hidden="true">
                        <path d="M3.500 0v7M0 3.500h7" stroke="#2e2e2e" strokeWidth="1.600" />
                    </svg>
                </button>
            </div>
            <button className="w-8 shrink-0 text-center">100%</button>
        </div>
    );
}

export default function App() {
    return (
        <div className="flex h-screen flex-col overflow-hidden bg-[#f6f5f4] font-['Noto_Sans',sans-serif]">
            <div className="flex h-[17px] shrink-0 items-center justify-between border-b border-[#e3e1df] pl-[5px] text-[9px] text-[#3d3d3d]">
                <div className="flex w-[364px] justify-between">
                    {['File', 'Edit', 'View', 'Insert', 'Format', 'Styles', 'Sheet', 'Data', 'Tools', 'Window', 'Help'].map((name) => (
                        <button key={name} className="leading-[12px]">{name}</button>
                    ))}
                </div>
                <button aria-label="Close document" className="mr-[3px]">
                    <Icon name="close" />
                </button>
            </div>
            <div className="flex h-[26px] shrink-0 items-center pl-0.5">
                <BarItems items={STANDARD_BAR} />
            </div>
            <div className="flex h-[28px] shrink-0 items-center pl-[3px]">
                <Combo label="Font Name" value="Calibri" className="w-[137px]" inputClass="italic" />
                <Combo label="Font Size" value="16 pt" className="mx-[5px] w-[68px]" />
                <BarItems items={FORMAT_BAR} />
            </div>
            <div className="flex min-h-0 flex-1">
                <div className="flex min-w-0 flex-1 flex-col">
                    <FormulaBar />
                    <div className="flex min-h-0 flex-1">
                        <Sheet />
                        <div className="w-[9px] shrink-0 border-t-2 border-[#4a4a4a] bg-[#cbcbcb] px-0.5 pt-0.5">
                            <div className="h-[47%] rounded-full bg-[#808080]" />
                        </div>
                    </div>
                    <div className="mr-[9px] flex h-[10px] shrink-0 items-center border-r-2 border-[#6a6a6a] bg-[#cbcbcb] pl-0.5">
                        <div className="h-[6px] w-[46%] rounded-full bg-[#808080]" />
                    </div>
                    <Tabs />
                </div>
                <Sidebar />
            </div>
            <StatusBar />
        </div>
    );
}
